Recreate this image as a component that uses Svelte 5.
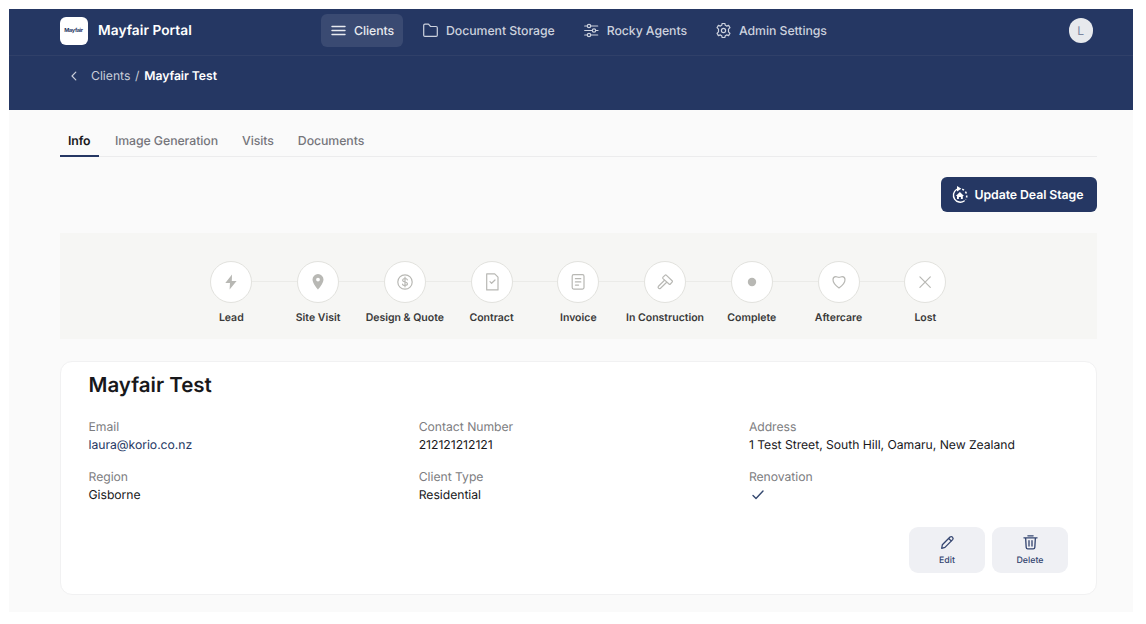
<script>
    let navItems = [
        { label: 'Clients', icon: 'menu' },
        { label: 'Document Storage', icon: 'folder' },
        { label: 'Rocky Agents', icon: 'sliders' },
        { label: 'Admin Settings', icon: 'gear' },
    ];
    let tabs = ['Info', 'Image Generation', 'Visits', 'Documents'];
    let stages = [
        { label: 'Lead', icon: 'bolt' },
        { label: 'Site Visit', icon: 'pin' },
        { label: 'Design & Quote', icon: 'dollar' },
        { label: 'Contract', icon: 'contract' },
        { label: 'Invoice', icon: 'invoice' },
        { label: 'In Construction', icon: 'hammer' },
        { label: 'Complete', icon: 'dot' },
        { label: 'Aftercare', icon: 'heart' },
        { label: 'Lost', icon: 'cross' },
    ];
    let fields = [
        { label: 'Email', value: 'laura@korio.co.nz', link: true },
        { label: 'Contact Number', value: '212121212121' },
        { label: 'Address', value: '1 Test Street, South Hill, Oamaru, New Zealand' },
        { label: 'Region', value: 'Gisborne' },
        { label: 'Client Type', value: 'Residential' },
        { label: 'Renovation', value: true },
    ];

    let activeNav = 'Clients';
    let activeTab = 'Info';
</script>

<div class="frame">
    <header>
        <div class="topbar">
            <div class="brand">
                <div class="logo"><span>Mayfair</span></div>
                <span class="brandName">Mayfair Portal</span>
            </div>
            <nav>
                {#each navItems as item}
                <button class={"navItem " + (activeNav === item.label ? "navActive" : '')} on:click={() => {activeNav = item.label}}>
                    <svg viewBox="0 0 15 15">
                        {#if item.icon === 'menu'}
                        <path d="M1 3.5h13M1 7.5h13M1 11.5h13" stroke-width="1.4" />
                        {:else if item.icon === 'folder'}
                        <path d="M.7 12.2V2.4Q.7 1.2 1.9 1.2h3.2q.7 0 1.1.6l.8 1.1q.4.6 1.1.6h5q1.2 0 1.2 1.2v7.5q0 1.2-1.2 1.2H1.9Q.7 13.4.7 12.2z" />
                        {:else if item.icon === 'sliders'}
                        <path d="M.7 3h2.5M6.8 3h6.9M.7 7.5h7.5M11.8 7.5h2.2M.7 12h2.5M6.8 12h6.9" />
                        <circle cx="5" cy="3" r="1.7" /><circle cx="10" cy="7.5" r="1.7" /><circle cx="5" cy="12" r="1.7" />
                        {:else}
                        <path d="M6.2.3h2.6l.5 2 1.3.8 2-.7 1.4 2.3-1.5 1.5v2.6l1.5 1.5-1.4 2.3-2-.7-1.3.8-.5 2H6.2l-.5-2-1.3-.8-2 .7L1 10.3l1.5-1.5V6.2L1 4.7l1.4-2.3 2 .7 1.3-.8z" />
                        <circle cx="7.5" cy="7.5" r="2.1" />
                        {/if}
                    </svg>
                    {item.label}
                </button>
                {/each}
            </nav>
            <div class="avatar">L</div>
        </div>
        <div class="crumbs">
            <svg viewBox="0 0 8 10"><path d="M5.8 1.2 2 5l3.8 3.8" /></svg>
            <span>Clients</span><span class="slash">/</span><b>Mayfair Test</b>
        </div>
    </header>

    <main>
        <div class="tabs">
            {#each tabs as tab}
            <button class={"tab " + (activeTab === tab ? "tabActive" : '')} on:click={() => {activeTab = tab}}>{tab}</button>
            {/each}
        </div>

        <div class="toolbar">
            <button class="update">
                <svg viewBox="0 0 18 18">
                    <path d="M5.5 3.5A6.8 6.8 0 1 0 13.2 15" stroke-width="1.4" />
                    <path d="M11.2 3.3A6.8 6.8 0 0 1 14.6 13.5" stroke-width="1.6" stroke-linecap="butt" stroke-dasharray="2 2" />
                    <path d="M6 0 10.4 2.7 6 5.4z" fill="currentColor" stroke="none" />
                    <path d="M4.8 9.9 8.9 6.1l4.1 3.8h-1.2v3.2H9.9v-2h-2v2H6V9.9z" fill="currentColor" stroke="none" />
                </svg>
                Update Deal Stage
            </button>
        </div>

        <div class="stages">
            {#each stages as stage}
            <div class="stage">
                <div class="track">
                    <div class="circle">
                        <svg viewBox="0 0 20 20">
                            {#if stage.icon === 'bolt'}
                            <path class="solid" d="M11 2.6 4.3 11H9L8.6 17.4 15.6 8.9H10.8z" />
                            {:else if stage.icon === 'pin'}
                            <path class="solid" fill-rule="evenodd" d="M10 2.1a5.5 5.5 0 0 0-5.5 5.5c0 4 5.5 10.1 5.5 10.1s5.5-6.1 5.5-10.1A5.5 5.5 0 0 0 10 2.1zm0 3.6a1.9 1.9 0 1 1 0 3.8 1.9 1.9 0 0 1 0-3.8z" />
                            {:else if stage.icon === 'dollar'}
                            <circle cx="10" cy="10" r="7.2" />
                            <path d="M12.4 7.9Q12 6.5 10 6.5T7.6 8.2Q7.7 9.6 10 10t2.5 1.8Q12.4 13.5 10 13.5T7.5 12M10 5.2v9.6" />
                            {:else if stage.icon === 'contract'}
                            <path d="M4.7 1.9h8L16 5.2v12.7H4.7zM8 9.7l1.6 1.6L13 8" />
                            {:else if stage.icon === 'invoice'}
                            <rect x="4.2" y="2.7" width="11.8" height="14.4" rx="1.5" />
                            <path d="M7.4 6.7h5.4M7.4 9.9h5.4M7.4 13.1h3.2" />
                            {:else if stage.icon === 'hammer'}
                            <path d="m8 5.2 1.9-1.9q.8-.8 1.6 0l5.6 5.5q.7.7 0 1.4l-1.7 1.8q-.7.7-1.4 0L8 6.6q-.7-.7 0-1.4z" />
                            <path d="m9.5 8.3-6 5.9q-.9 1 0 2t2 0l6.2-5.9" />
                            {:else if stage.icon === 'dot'}
                            <circle class="solid" cx="10" cy="10" r="4.2" />
                            {:else if stage.icon === 'heart'}
                            <path d="M10 15.9C7.2 14 4 11.6 4 7.8 4 5.7 5.3 4.7 6.8 4.7c1.3 0 1.7.7 3.2.7s1.9-.7 3.2-.7C14.7 4.7 16 5.7 16 7.8c0 3.8-3.2 6.2-6 8.1z" />
                            {:else}
                            <path d="m4.9 4.9 10.4 10.4M15.3 4.9 4.9 15.3" />
                            {/if}
                        </svg>
                    </div>
                </div>
                <span>{stage.label}</span>
            </div>
            {/each}
        </div>

        <section class="card">
            <h1>Mayfair Test</h1>
            <div class="fields">
                {#each fields as field}
                <div class="field">
                    <span class="fieldLabel">{field.label}</span>
                    {#if field.value === true}
                    <svg class="check" viewBox="0 0 14 12"><path d="m2 6.5 3 3L12 2" /></svg>
                    {:else if field.link}
                    <a href={"mailto:" + field.value}>{field.value}</a>
                    {:else}
                    <p>{field.value}</p>
                    {/if}
                </div>
                {/each}
            </div>
            <div class="actions">
                <button>
                    <svg viewBox="0 0 16 16">
                        <path d="m1.8 14.2.7-3.8 8.2-8.2q1.4-1.1 2.6.1 1.3 1.3.2 2.6l-8.2 8.3zM9.3 3.7l2.8 2.8" />
                    </svg>
                    Edit
                </button>
                <button>
                    <svg viewBox="0 0 16 16">
                        <path d="M1 3h14M5.2.9h5.6M2.8 3.2l.6 10q.1 1.6 1.7 1.6h5.8q1.6 0 1.7-1.6l.6-10M6.4 6v5.7M9.6 6v5.7" />
                    </svg>
                    Delete
                </button>
            </div>
        </section>
    </main>
</div>

<style>
    :global(body) {
        background: #fff;
    }

    .frame {
        width: 1123.5px;
        height: 603px;
        margin: 9px 0 0 9px;
        background: #fafafa;
        font-family: Inter, "Liberation Sans", sans-serif;
        color: #18181b;
        overflow: hidden;
        text-rendering: geometricPrecision;
    }

    svg {
        fill: none;
        stroke: currentColor;
        stroke-width: 1.2;
        stroke-linecap: round;
        stroke-linejoin: round;
        flex: none;
    }

    button {
        border: none;
        background: none;
        font-family: inherit;
        text-rendering: inherit;
        padding: 0;
        cursor: pointer;
        white-space: nowrap;
    }

    header {
        background: #253763;
        height: 101.4px;
        color: white;
    }

    .topbar {
        display: flex;
        align-items: center;
        box-sizing: border-box;
        height: 47px;
        padding: 0 39.5px 3px 50.5px;
        border-bottom: 1px solid #304069;
    }

    .brand {
        display: flex;
        align-items: center;
        gap: 10.5px;
        width: 261.5px;
    }

    .logo {
        display: flex;
        align-items: center;
        justify-content: center;
        width: 28px;
        height: 28px;
        border-radius: 6px;
        background: white;
        color: #253763;
        font-size: 5.5px;
        font-weight: 700;
        letter-spacing: -0.3px;
    }

    .brandName {
        font-size: 13.7px;
        font-weight: 600;
        letter-spacing: 0.06px;
    }

    nav {
        display: flex;
        gap: 10px;
        flex: 1;
    }

    .navItem {
        display: flex;
        align-items: center;
        gap: 8px;
        height: 33px;
        padding: 0 9px 0 10px;
        border-radius: 6px;
        color: #cdd2de;
        font-size: 12.3px;
        font-weight: 500;
        letter-spacing: -0.07px;
    }

    .navItem svg {
        width: 15px;
        height: 15px;
    }

    .navActive {
        background: #3a4a72;
        color: #e9ebf0;
    }

    .avatar {
        display: flex;
        align-items: center;
        justify-content: center;
        width: 24.5px;
        height: 24.5px;
        border-radius: 50%;
        background: #e7e9ed;
        color: #7c869f;
        font-size: 12px;
    }

    .crumbs {
        display: flex;
        align-items: center;
        height: 39px;
        padding-left: 60.5px;
        font-size: 12.2px;
        color: #c8cdd9;
    }

    .crumbs svg {
        width: 8px;
        height: 10px;
        margin-right: 13.5px;
    }

    .slash {
        margin: 0 4.7px;
    }

    .crumbs b {
        color: white;
        font-weight: 600;
        letter-spacing: -0.05px;
    }

    main {
        padding: 14.6px 36px 0 50.5px;
    }

    .tabs {
        display: flex;
        gap: 8px;
        height: 31px;
        border-bottom: 1px solid #ececed;
    }

    .tab {
        height: 32px;
        padding: 2px 8px 0;
        border-bottom: 2px solid transparent;
        color: #75757a;
        font-size: 12.3px;
        font-weight: 500;
        letter-spacing: -0.07px;
    }

    .tabActive {
        padding: 2px 8.4px 0;
        border-color: #253763;
        color: #18181b;
        font-weight: 600;
    }

    .toolbar {
        display: flex;
        justify-content: flex-end;
        padding: 20.4px 0 21px;
    }

    .update {
        display: flex;
        align-items: center;
        gap: 5.5px;
        box-sizing: border-box;
        width: 156px;
        height: 35px;
        padding-left: 10.5px;
        border-radius: 6px;
        background: #253763;
        color: white;
        font-size: 12.3px;
        font-weight: 600;
        letter-spacing: -0.07px;
    }

    .update svg {
        width: 18px;
        height: 18px;
    }

    .stages {
        display: flex;
        justify-content: center;
        box-sizing: border-box;
        height: 106px;
        padding: 27.3px 0 0 0.6px;
        background: #f6f6f4;
    }

    .stage {
        display: flex;
        flex-direction: column;
        align-items: center;
        width: 86.75px;
    }

    .stage > span {
        margin-top: 8.3px;
        font-size: 10.5px;
        line-height: 14px;
        font-weight: 600;
        color: #3a3a3a;
        white-space: nowrap;
    }

    .track {
        display: flex;
        align-items: center;
        align-self: stretch;
    }

    .track::before,
    .track::after {
        content: '';
        flex: 1;
        height: 1.5px;
        background: #ebebe8;
    }

    .stage:first-child .track::before,
    .stage:last-child .track::after {
        background: none;
    }

    .circle {
        display: flex;
        align-items: center;
        justify-content: center;
        box-sizing: border-box;
        width: 42px;
        height: 42px;
        border: 1px solid #e2e2de;
        border-radius: 50%;
        background: white;
        color: #b8b8b4;
    }

    .circle svg {
        width: 20px;
        height: 20px;
    }

    .solid {
        fill: currentColor;
        stroke: none;
    }

    .card {
        box-sizing: border-box;
        height: 234.5px;
        margin-top: 21.6px;
        padding: 10.2px 28px 0;
        border: 1px solid #f1f1f2;
        border-radius: 12px;
        background: white;
    }

    h1 {
        margin: 0;
        font-size: 20.5px;
        line-height: 26px;
        font-weight: 600;
    }

    .fields {
        display: grid;
        grid-template-columns: repeat(3, 330.2px);
        row-gap: 14px;
        margin-top: 20.2px;
    }

    .field {
        height: 36px;
        font-size: 12.2px;
        line-height: 18px;
        letter-spacing: -0.03px;
        white-space: nowrap;
    }

    .fieldLabel {
        display: block;
        color: #7d7d7f;
    }

    .field p {
        margin: 0;
    }

    .field a {
        color: #253763;
        text-decoration: none;
    }

    .check {
        display: block;
        width: 14px;
        height: 12px;
        margin: 3px 0 0 2px;
        color: #34486f;
        stroke-width: 1.4;
    }

    .actions {
        display: flex;
        justify-content: flex-end;
        gap: 7px;
        margin-top: 22.6px;
    }

    .actions button {
        display: flex;
        flex-direction: column;
        align-items: center;
        justify-content: center;
        gap: 5px;
        width: 76px;
        height: 46.5px;
        padding-left: 1px;
        border-radius: 9px;
        background: #eff0f4;
        color: #344570;
        font-size: 8.8px;
        font-weight: 500;
    }

    .actions svg {
        width: 15px;
        height: 15px;
        stroke-width: 1.4;
    }
</style>
